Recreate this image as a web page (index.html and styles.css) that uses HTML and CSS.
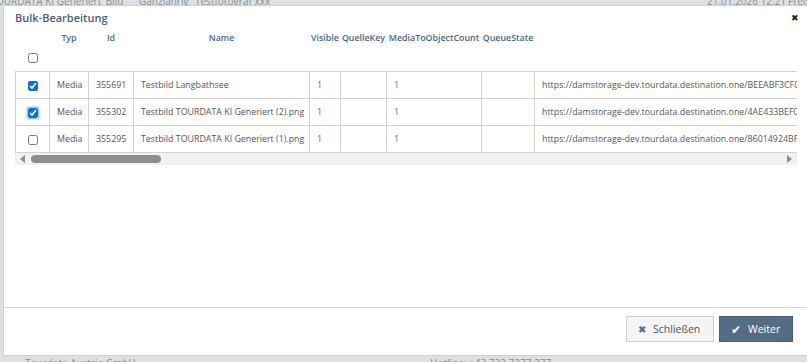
FILE: index.html
```html
<!DOCTYPE html>
<html lang="de">
<head>
  <meta charset="UTF-8" />
  <title>Bulk-Bearbeitung</title>
  <link rel="stylesheet" href="styles.css">
</head>
<body>
  <div class="page">
    <div class="page-row">
      <span class="c1">OURDATA KI Generiert_Bild</span>
      <span class="c2">Ganzjährig</span>
      <span class="c3">Testfotograf xxx</span>
      <span class="c4">21.01.2026 12:21</span>
      <span class="c5">Freischalten</span>
    </div>
    <div class="page-foot">
      <span class="f1">Tourdata Austria GmbH</span>
      <span class="f2">Hotline: +43 732 7277 277</span>
    </div>
  </div>

  <div class="modal">
    <div class="modal-head">
      <span class="modal-title">Bulk-Bearbeitung</span>
      <span class="modal-close">&#10006;</span>
    </div>

    <div class="modal-body">
      <div class="grid-wrap">
        <table class="grid">
          <colgroup>
            <col style="width:34px">
            <col style="width:39px">
            <col style="width:45px">
            <col style="width:176px">
            <col style="width:31px">
            <col style="width:46px">
            <col style="width:95px">
            <col style="width:53px">
            <col style="width:566px">
          </colgroup>
          <thead>
            <tr class="head-labels">
              <th></th>
              <th>Typ</th>
              <th>Id</th>
              <th>Name</th>
              <th>Visible</th>
              <th>QuelleKey</th>
              <th>MediaToObjectCount</th>
              <th>QueueState</th>
              <th>Url</th>
            </tr>
            <tr class="head-select">
              <th class="chk"><input type="checkbox"></th>
              <th></th><th></th><th></th><th></th><th></th><th></th><th></th><th></th>
            </tr>
          </thead>
          <tbody>
            <tr>
              <td class="chk"><input type="checkbox" checked></td>
              <td>Media</td>
              <td>355691</td>
              <td>Testbild Langbathsee</td>
              <td class="num">1</td>
              <td></td>
              <td class="num">1</td>
              <td></td>
              <td>https://damstorage-dev.tourdata.destination.one/BEEABF3CF0A24C7E9D1F/Testbild_Langbathsee.jpg</td>
            </tr>
            <tr>
              <td class="chk"><input type="checkbox" class="focused" checked></td>
              <td>Media</td>
              <td>355302</td>
              <td>Testbild TOURDATA KI Generiert (2).png</td>
              <td class="num">1</td>
              <td></td>
              <td class="num">1</td>
              <td></td>
              <td>https://damstorage-dev.tourdata.destination.one/4AE433BEF0C14A2B8E77/Testbild_KI_2.png</td>
            </tr>
            <tr>
              <td class="chk"><input type="checkbox"></td>
              <td>Media</td>
              <td>355295</td>
              <td>Testbild TOURDATA KI Generiert (1).png</td>
              <td class="num">1</td>
              <td></td>
              <td class="num">1</td>
              <td></td>
              <td>https://damstorage-dev.tourdata.destination.one/86014924BF5E4D0A9C33/Testbild_KI_1.png</td>
            </tr>
          </tbody>
        </table>
      </div>
      <div class="hscroll">
        <span class="arrow-left"></span>
        <div class="track"><div class="thumb"></div></div>
        <span class="arrow-right"></span>
      </div>
    </div>

    <div class="modal-foot">
      <button class="btn btn-close"><span class="ico">&#10006;</span>Schließen</button>
      <button class="btn btn-next"><span class="ico">&#10004;</span>Weiter</button>
    </div>
  </div>
</body>
</html>
```

FILE: styles.css
```css
body {
  font-family: 'Open Sans', sans-serif;
  margin: 0;
  padding: 0;
  background-color: #dfe0e1;
  height: 362px;
  overflow: hidden;
}

.page {
  height: 362px;
  display: flex;
  flex-direction: column;
  justify-content: space-between;
  color: #8a8f96;
  font-size: 10px;
}

.page-row {
  display: flex;
  margin-top: -6px;
  margin-left: -4px;
  white-space: nowrap;
}

.page-row span {
  flex-shrink: 0;
}

.page-row .c1 { width: 143px; }
.page-row .c2 { width: 56px; }
.page-row .c3 { width: 512px; }
.page-row .c4 { width: 81px; }

.page-foot {
  display: flex;
  padding-left: 25px;
  margin-bottom: -8px;
  color: #7d8a99;
}

.page-foot .f1 { width: 405px; }

.modal {
  position: absolute;
  left: 3px;
  top: 5px;
  width: 820px;
  height: 349px;
  background-color: white;
  border: 1px solid #cfd2d5;
  display: flex;
  flex-direction: column;
}

.modal-head {
  height: 22px;
  display: flex;
  align-items: center;
  justify-content: space-between;
  padding: 0 25px 0 11px;
}

.modal-title {
  font-size: 11px;
  font-weight: 600;
  color: #4b5b6d;
}

.modal-close {
  font-size: 9px;
  color: #222;
}

.modal-body {
  flex: 1;
  padding: 0 22px 0 11px;
}

.grid-wrap {
  width: 782px;
  overflow: hidden;
}

.grid {
  border-collapse: collapse;
  table-layout: fixed;
  width: 1085px;
  font-size: 8.85px;
  color: #555;
}

.grid th {
  font-weight: 600;
  color: #4c6684;
  text-align: center;
  white-space: nowrap;
  padding: 0;
}

.head-labels th {
  height: 20px;
  padding-bottom: 2px;
}

.head-select th {
  height: 21px;
}

.grid td {
  border: 1px solid #d2d2d2;
  height: 26px;
  padding: 0 7px;
  white-space: nowrap;
  overflow: hidden;
}

.grid td.num {
  color: #55708f;
}

.grid .chk {
  text-align: center;
  padding: 0;
}

.grid input[type="checkbox"] {
  width: 10px;
  height: 10px;
  margin: 0;
  vertical-align: middle;
  accent-color: #0a6fd6;
}

.head-select input[type="checkbox"] {
  margin-top: -6px;
}

.grid input.focused {
  box-shadow: 0 0 2px 1px rgba(10, 111, 214, 0.55);
}

.hscroll {
  width: 782px;
  height: 12px;
  background-color: #f1f1f1;
  display: flex;
  align-items: center;
}

.arrow-left {
  width: 0;
  height: 0;
  margin-left: 5px;
  border-top: 4px solid transparent;
  border-bottom: 4px solid transparent;
  border-right: 5px solid #8e8e8e;
}

.track {
  flex: 1;
  margin: 0 6px;
}

.thumb {
  width: 130px;
  height: 8px;
  border-radius: 4px;
  background-color: #8e8e8e;
}

.arrow-right {
  width: 0;
  height: 0;
  margin-right: 5px;
  border-top: 4px solid transparent;
  border-bottom: 4px solid transparent;
  border-left: 5px solid #8e8e8e;
}

.modal-foot {
  height: 39px;
  border-top: 1px solid #d5d8da;
  margin-left: 1px;
  display: flex;
  justify-content: flex-end;
  align-items: flex-start;
  gap: 5px;
  padding: 8px 31px 0 0;
}

.btn {
  font-family: 'Open Sans', sans-serif;
  font-size: 10.5px;
  height: 26px;
  padding: 0 11px;
  border-radius: 0;
  display: flex;
  align-items: center;
  cursor: pointer;
}

.btn .ico {
  margin-right: 7px;
}

.btn-close {
  width: 88px;
  background-color: #f3f4f5;
  border: 1px solid #cdd1d5;
  color: #555;
}

.btn-close .ico {
  font-size: 10px;
  color: #5e6e80;
}

.btn-next {
  width: 74px;
  background-color: #546c84;
  border: 1px solid #4a6079;
  color: white;
}

.btn-next .ico {
  font-size: 12px;
}
```
